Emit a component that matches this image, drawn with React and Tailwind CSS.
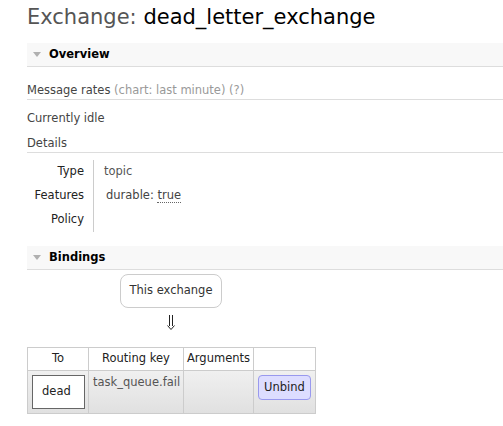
import React from "react";

// 섹션 헤더 바 (접기 삼각형 + 굵은 제목)
function SectionBar({ title, className = "" }) {
  return (
    <div className={`flex items-center h-[24px] bg-[#f8f8f8] border-b border-[#dddddd] ${className}`}>
      <span className="ml-[6px] w-0 h-0 border-l-[4px] border-r-[4px] border-t-[5px] border-l-transparent border-r-transparent border-t-[#b0b0b0]" />
      <span className="ml-[8px] font-bold text-[11.5px] text-black">{title}</span>
    </div>
  );
}

export default function App() {
  return (
    <div
      className="min-h-screen bg-white text-[#444444] text-[11.5px] pl-[27px] overflow-hidden"
      style={{ fontFamily: '"DejaVu Sans", Verdana, sans-serif' }}
    >
      {/* 제목 */}
      <h1 className="h-[43px] pt-[5px] text-[21px] leading-[25px] whitespace-nowrap">
        <span className="text-[#555555]">Exchange: </span>
        <span className="text-black">dead_letter_exchange</span>
      </h1>

      {/* Overview */}
      <SectionBar title="Overview" />
      <div className="pt-[15px] pb-[1px] leading-[16px] border-b border-[#dddddd]">
        Message rates <span className="text-[#999999]">(chart: last minute) (?)</span>
      </div>
      <div className="mt-[10px] leading-[16px]">Currently idle</div>
      <div className="mt-[9px] pb-[1px] leading-[16px] border-b border-[#dddddd]">Details</div>

      {/* 상세 정보 */}
      <div className="flex mt-[7px]">
        <div className="w-[66px] pr-[9px] text-right text-[#222222]">
          <div className="h-[24px] flex items-center justify-end">Type</div>
          <div className="h-[24px] flex items-center justify-end">Features</div>
          <div className="h-[24px] flex items-center justify-end">Policy</div>
        </div>
        <div className="border-l border-[#cccccc] pl-[10px] h-[72px]">
          <div className="h-[24px] flex items-center text-[#555555]">topic</div>
          <div className="h-[24px] flex items-center pl-[2px] text-[#444444]">
            durable:&nbsp;
            <span className="border-b border-dotted border-[#666666] leading-[13px]">true</span>
          </div>
          <div className="h-[24px]" />
        </div>
      </div>

      {/* Bindings */}
      <SectionBar title="Bindings" className="mt-[14px]" />
      <div className="w-[288px] flex flex-col items-center">
        <div className="mt-[4px] w-[102px] h-[34px] rounded-[8px] border border-[#cccccc] flex items-center justify-center text-[#333333]">
          This exchange
        </div>
        {/* 아래 방향 이중 화살표 */}
        <div className="h-[39px] pt-[7px]">
          <svg width="8" height="15" viewBox="0 0 8 15" fill="none" stroke="#222222" strokeWidth="1">
            <path d="M2.5 0V11M5.5 0V11" />
            <path d="M0.5 10.5L4 14.5L7.5 10.5" />
          </svg>
        </div>
      </div>

      <table className="border-collapse text-[11.5px]">
        <thead>
          <tr className="h-[23px]">
            <th className="w-[61px] border border-[#cccccc] font-normal text-[#222222] text-center">To</th>
            <th className="w-[95px] border border-[#cccccc] font-normal text-[#222222] text-center">Routing key</th>
            <th className="w-[70px] border border-[#cccccc] font-normal text-[#222222] text-center">Arguments</th>
            <th className="w-[62px] border border-[#cccccc]" />
          </tr>
        </thead>
        <tbody>
          <tr className="h-[43px] bg-gradient-to-b from-[#f0f0f0] to-[#e0e0e0]">
            <td className="border border-[#cccccc] align-top pt-[4px] pl-[4px]">
              <div className="w-[53px] h-[34px] border border-[#666666] bg-white flex items-center pl-[9px] text-[#222222]">
                dead
              </div>
            </td>
            <td className="border border-[#cccccc] align-top pt-[3px] pl-[4px] text-[#555555] leading-[16px]">
              task_queue.fail
            </td>
            <td className="border border-[#cccccc]" />
            <td className="border border-[#cccccc] align-top pt-[4px] pl-[4px]">
              <div className="w-[53px] h-[25px] rounded-[4px] border border-[#9999ee] bg-[#ddddff] flex items-center justify-center text-[#222222]">
                Unbind
              </div>
            </td>
          </tr>
        </tbody>
      </table>
    </div>
  );
}
